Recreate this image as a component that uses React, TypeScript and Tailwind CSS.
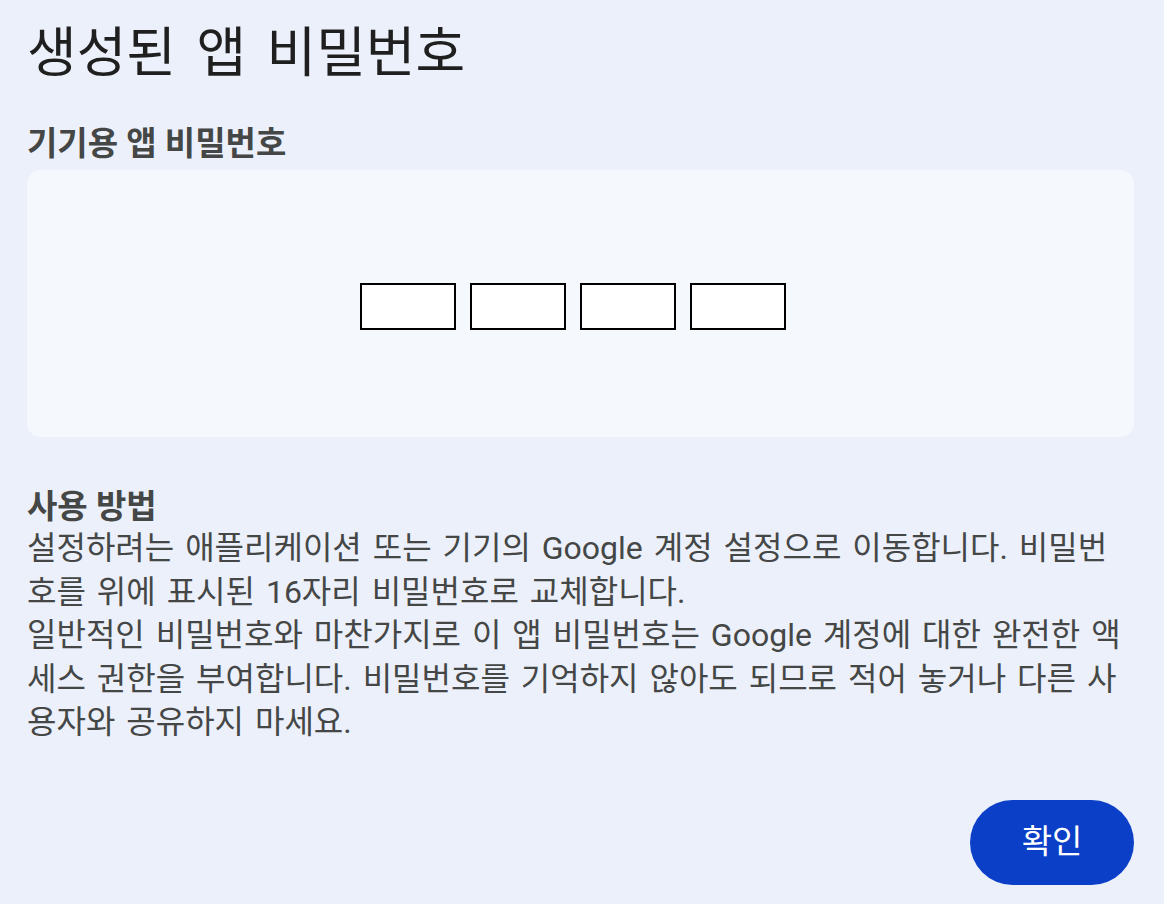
export default function App() {
  const font = { fontFamily: '"Roboto", "Noto Sans CJK KR", sans-serif' };
  return (
    <div className="min-h-[904px] w-full bg-[#ecf0fa] px-[27px] pt-[21px]" style={font}>
      <h1 className="text-[54px] leading-[66px] font-normal text-[#1f1f1f] [word-spacing:7px]">생성된 앱 비밀번호</h1>

      <h2 className="mt-[38px] text-[33px] leading-[38px] font-bold text-[#444746]">기기용 앱 비밀번호</h2>

      <div className="mt-[7px] mr-[3px] flex h-[267px] items-center justify-center rounded-[14px] bg-[#f5f8fc]">
        <div className="flex gap-[14px] pt-[5px] pr-[15px]">
          {[0, 1, 2, 3].map((i) => (
            <div key={i} className="h-[47px] w-[96px] border-2 border-black bg-white" />
          ))}
        </div>
      </div>

      <div className="mt-[50px] text-[#444746]">
        <h3 className="text-[33px] leading-[40px] font-bold">사용 방법</h3>
        <div className="whitespace-nowrap text-[32px] leading-[43.5px] [word-spacing:3px]">
          <p>
            설정하려는 애플리케이션 또는 기기의 Google 계정 설정으로 이동합니다. 비밀번
            <br />
            호를 위에 표시된 16자리 비밀번호로 교체합니다.
          </p>
          <p>
            일반적인 비밀번호와 마찬가지로 이 앱 비밀번호는 Google 계정에 대한 완전한 액
            <br />
            세스 권한을 부여합니다. 비밀번호를 기억하지 않아도 되므로 적어 놓거나 다른 사
            <br />
            용자와 공유하지 마세요.
          </p>
        </div>
      </div>

      <div className="mt-[55px] mr-[3px] flex justify-end">
        <button className="h-[85px] w-[164px] rounded-full bg-[#0b3fc7] text-[33px] text-white">확인</button>
      </div>
    </div>
  );
}
